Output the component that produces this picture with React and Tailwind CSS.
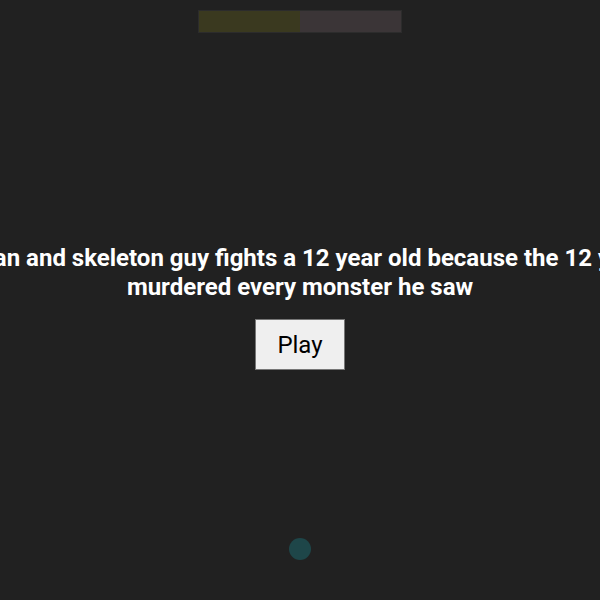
export default function App() {
  return (
    <div className="w-[600px] h-[600px] bg-[#212121] overflow-hidden flex flex-col items-center relative" style={{ fontFamily: "Roboto, sans-serif" }}>
      <div className="mt-[10px] w-[204px] h-[23px] border border-[#2c2c2c] bg-[#3b3537] flex">
        <div className="w-1/2 h-full bg-[#3a391f]"></div>
      </div>
      <div className="mt-[211px] w-[800px] shrink-0 text-center text-white font-bold text-[24px] leading-[29px]">
        Goat man and skeleton guy fights a 12 year old because the 12 year old murdered every monster he saw
      </div>
      <button className="mt-[17px] w-[90px] h-[51px] bg-[#efefef] border border-[#767676] text-[24px] text-black" style={{ fontFamily: "Roboto, sans-serif" }}>
        Play
      </button>
      <div className="mt-[168px] w-[22px] h-[22px] rounded-full bg-[#1e4649]"></div>
    </div>
  );
}
